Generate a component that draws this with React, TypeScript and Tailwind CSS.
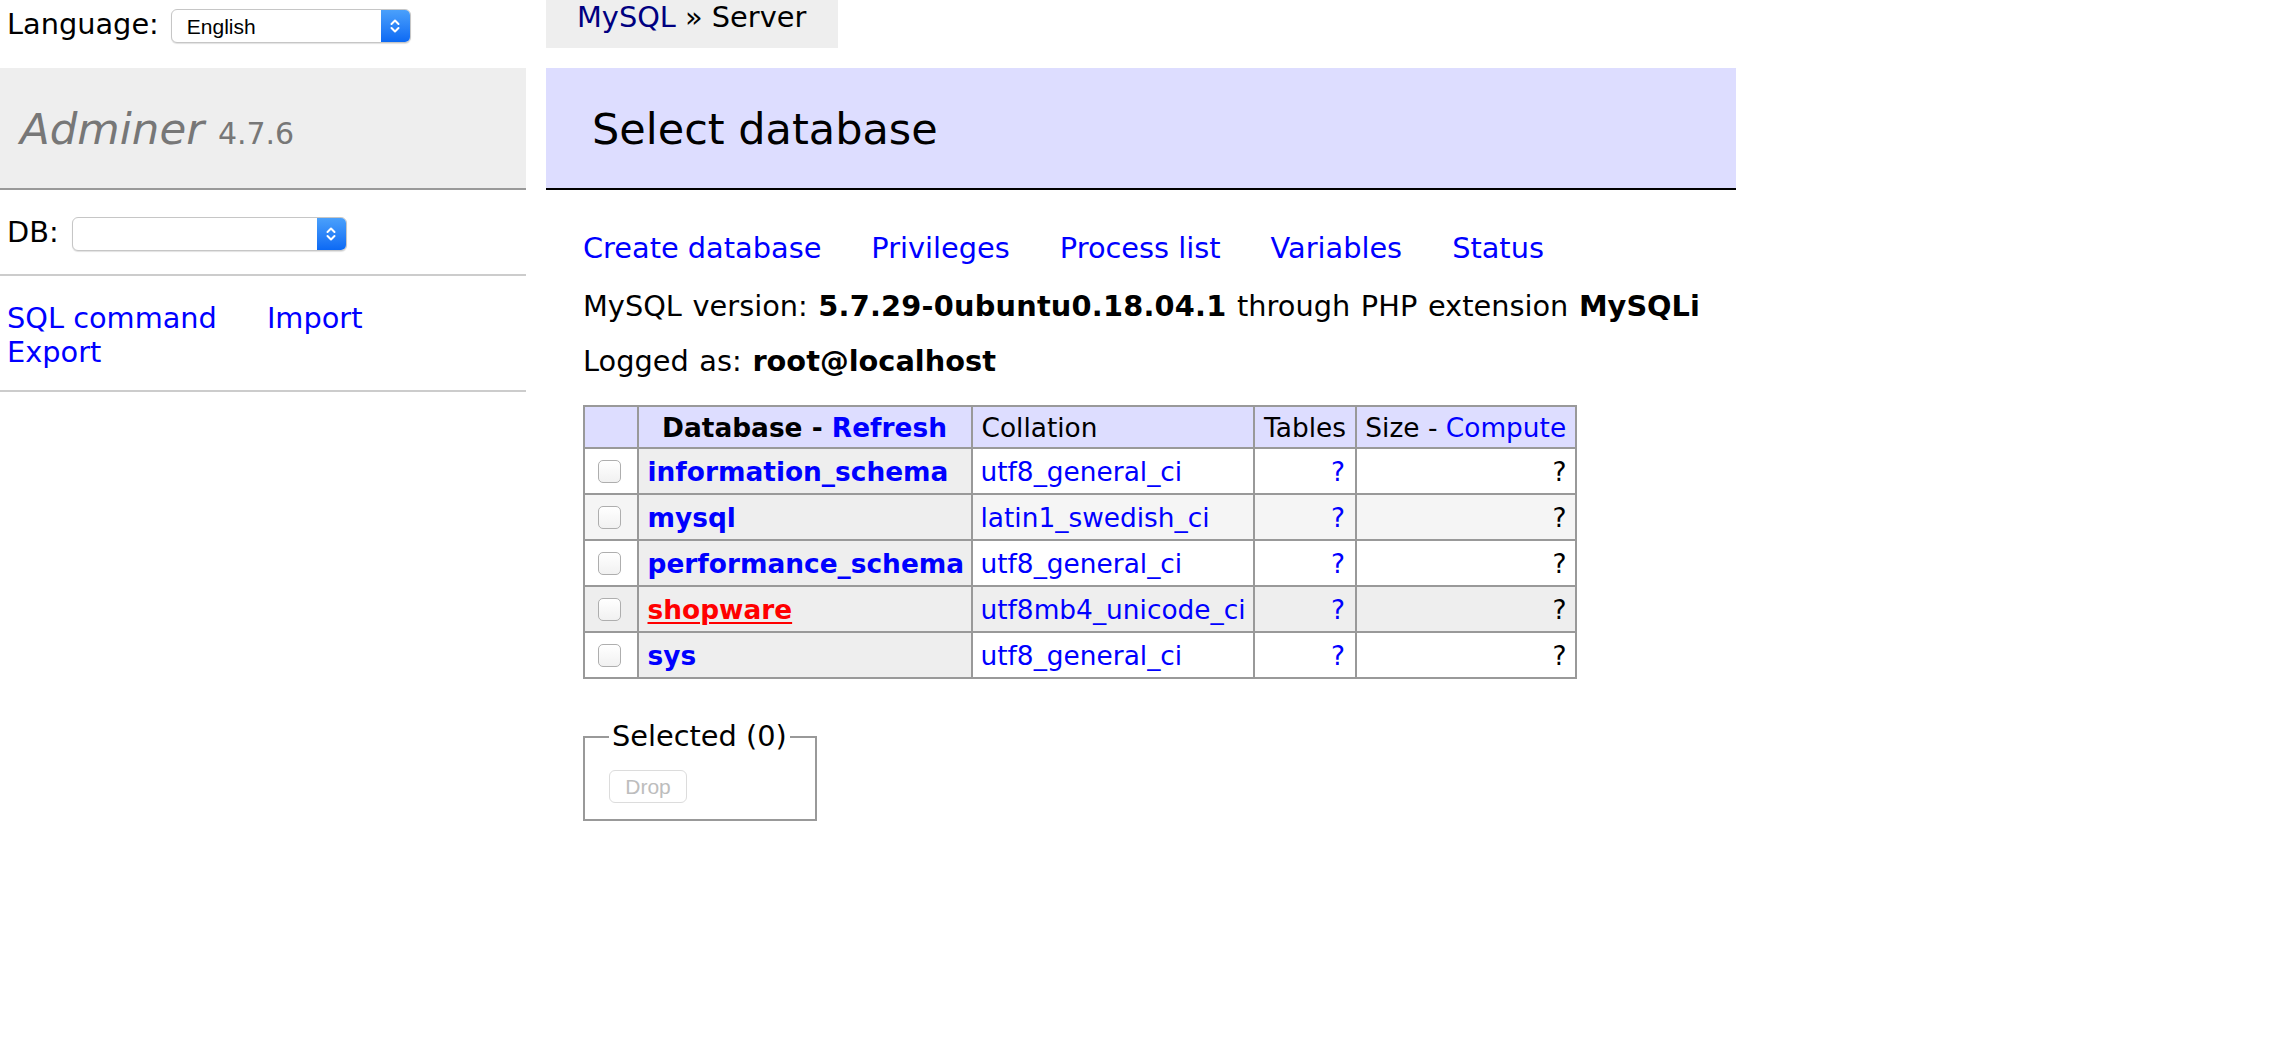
import { Fragment } from "react";

const Chevrons = () => (
  <svg width="12" height="20" viewBox="0 0 12 20" fill="none" stroke="white" strokeWidth="2" strokeLinecap="round" strokeLinejoin="round">
    <path d="M2.5 8 6 4.5 9.5 8" />
    <path d="M2.5 12 6 15.5 9.5 12" />
  </svg>
);

function MacSelect({ className, value }: { className: string; value?: string }) {
  return (
    <div className={`flex h-[34px] shrink-0 overflow-hidden rounded-[6px] border border-[#c6c6c6] bg-white shadow-[0_1px_1px_rgba(0,0,0,0.12)] ${className}`}>
      <div className="flex flex-1 items-center pl-[15px] font-['Liberation_Sans',Arial,sans-serif] text-[21px] leading-none text-black">
        {value}
      </div>
      <div className="flex w-[29px] items-center justify-center bg-linear-to-b from-[#4aa0fb] to-[#0b69f4]">
        <Chevrons />
      </div>
    </div>
  );
}

const databases = [
  { name: "information_schema", collation: "utf8_general_ci", bg: "bg-white" },
  { name: "mysql", collation: "latin1_swedish_ci", bg: "bg-[#f5f5f5]" },
  { name: "performance_schema", collation: "utf8_general_ci", bg: "bg-white" },
  { name: "shopware", collation: "utf8mb4_unicode_ci", bg: "bg-[#eee]", hover: true },
  { name: "sys", collation: "utf8_general_ci", bg: "bg-white" },
];

const serverLinks = ["Create database", "Privileges", "Process list", "Variables", "Status"];

export default function App() {
  return (
    <div className="flex min-h-screen w-full bg-white font-['DejaVu_Sans',Verdana,sans-serif] text-[28.8px] leading-[35px] text-black">
      {/* sidebar */}
      <aside className="w-[526px] shrink-0">
        <div className="flex h-[68px] items-start pl-[7px]">
          <span className="pt-[7px]">Language:</span>
          <MacSelect className="ml-[12px] mt-[9px] w-[240px]" value="English" />
        </div>

        <h1 className="h-[122px] border-b-2 border-[#999] bg-[#eee] pl-[20px] pt-[34px] text-[43.5px] leading-[54px] font-normal text-[#777]">
          <a className="italic">Adminer</a> <span className="text-[30px]">4.7.6</span>
        </h1>

        <div className="flex items-start border-b-2 border-[#ccc] pl-[7px] pt-[25px] pb-[23px]">
          <span>DB:</span>
          <MacSelect className="ml-[13px] mt-[2px] w-[275px]" />
        </div>

        <div className="border-b-2 border-[#ccc] pl-[7px] pt-[25px] pb-[21px] leading-[34px]">
          <div className="flex w-[470px] flex-wrap gap-x-[50px] text-[#00f]">
            <a>SQL command</a>
            <a>Import</a>
            <a>Export</a>
          </div>
        </div>
      </aside>

      {/* content */}
      <main className="ml-[20px] w-[1190px] shrink-0">
        <div className="h-[48px] w-[292px] bg-[#eee] pl-[31px] whitespace-nowrap">
          <a className="text-[#000080]">MySQL</a> » Server
        </div>

        <h2 className="mt-[20px] h-[122px] border-b-2 border-black bg-[#ddf] pl-[46px] pt-[35px] text-[43px] leading-[52px] font-normal">
          Select database
        </h2>

        <div className="pl-[37px]">
          <p className="mt-[41px] flex gap-x-[50px] whitespace-nowrap text-[#00f]">
            {serverLinks.map((l) => (
              <a key={l}>{l}</a>
            ))}
          </p>
          <p className="mt-[23px] whitespace-nowrap [word-spacing:1.5px]">
            MySQL version: <b className="tracking-[0.2px]">5.7.29-0ubuntu0.18.04.1</b> through PHP extension <b>MySQLi</b>
          </p>
          <p className="mt-[20px] [word-spacing:1.5px]">
            Logged as: <b>root@localhost</b>
          </p>

          <div className="mt-[26px] grid w-fit grid-cols-[51.5px_332px_280.5px_100px_217.5px] gap-[2px] border-2 border-[#999] bg-[#999] text-[26.4px] leading-[31px]">
            <div className="h-[40px] bg-[#ddf]" />
            <div className="flex h-[40px] items-center justify-center bg-[#ddf] font-bold whitespace-nowrap">
              Database -&nbsp;<a className="text-[#00f]">Refresh</a>
            </div>
            <div className="flex h-[40px] items-center bg-[#ddf] pl-[9px]">Collation</div>
            <div className="flex h-[40px] items-center justify-center bg-[#ddf]">Tables</div>
            <div className="flex h-[40px] items-center justify-center bg-[#ddf] whitespace-nowrap">
              Size -&nbsp;<a className="text-[#00f]">Compute</a>
            </div>

            {databases.map((db) => (
              <Fragment key={db.name}>
                <div className={`flex h-[44px] items-center justify-center pr-[2px] ${db.bg}`}>
                  <span className="h-[23px] w-[23px] rounded-[5px] border border-[#aeaeae] bg-linear-to-b from-white to-[#f1f1f1]" />
                </div>
                <div className="flex h-[44px] items-center bg-[#eee] pl-[9px] font-bold whitespace-nowrap">
                  <a className={db.hover ? "text-[#f00] underline decoration-2 underline-offset-[3px]" : "text-[#00f]"}>{db.name}</a>
                </div>
                <div className={`flex h-[44px] items-center pl-[8px] text-[#00f] whitespace-nowrap ${db.bg}`}>{db.collation}</div>
                <div className={`flex h-[44px] items-center justify-end pr-[10px] text-[#00f] ${db.bg}`}>?</div>
                <div className={`flex h-[44px] items-center justify-end pr-[8px] ${db.bg}`}>?</div>
              </Fragment>
            ))}
          </div>

          <fieldset className="mt-[40px] w-[234px] border-2 border-[#999] px-[24px] pt-[13px] pb-[16px]">
            <legend className="px-[3px] leading-[35px]">Selected (0)</legend>
            <button
              disabled
              className="h-[33px] w-[78px] rounded-[6px] border border-[#dcdcdc] bg-white font-['Liberation_Sans',Arial,sans-serif] text-[21px] leading-none text-[#bdbdbd]"
            >
              Drop
            </button>
          </fieldset>
        </div>
      </main>
    </div>
  );
}
